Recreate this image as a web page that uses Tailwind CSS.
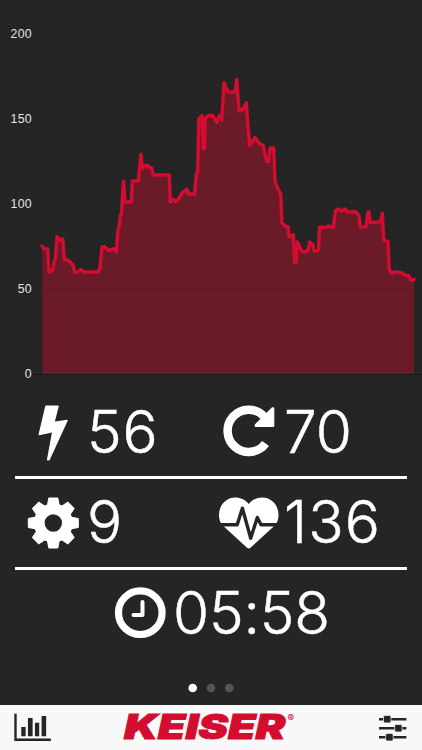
<!DOCTYPE html>
<html lang="en">
<head>
<meta charset="utf-8">
<title>Keiser</title>
<script src="https://cdn.jsdelivr.net/npm/@tailwindcss/browser@4"></script>
</head>
<body class="bg-[#252525]">
<main class="flex h-[750px] w-[422px] flex-col overflow-hidden bg-[#252525] font-['Inter','Liberation_Sans',sans-serif] text-white">
  <section class="flex h-[384px] shrink-0">
    <div class="flex w-8 flex-col justify-between pt-[25px] pb-[1px] text-right font-['Liberation_Sans',Arial,sans-serif] text-[12.3px] leading-[18px] tracking-[0.3px] text-[#e4e4e4]">
      <span>200</span><span>150</span><span>100</span><span>50</span><span>0</span>
    </div>
    <svg class="h-[384px] w-[390px]" viewBox="32 0 390 384" fill="none">
      <path d="M42 374V246L44 248.7L47.7 249L49 272L50.7 272L53 269L54 261.5L55.5 259L57 236.7L59.3 240L62.7 239L64.3 259.5L68.3 260.5L73 265L74.7 272H77.7L80.7 269.7L84.3 272H98.3L100 268L102 246.7H104.7L108.3 250.5L114 249L116.3 252L118 229L119.3 226L120.3 216L121.5 213L123.5 181L125 202H131.3L132.3 181.3L138.3 180.7L141 154.5L142.3 168.5L144.3 165.5H148L149.3 167.5L151.7 168L153 175H169.3L170.3 202L173.3 199L175.7 202L179.3 198L182 193L187 189L188.3 194H194.7L196.3 174L197.7 172L198.7 119L202 115.5L203 148.5H204.5L205.3 118L208.3 115.5H212.7L216.7 122.5L219.3 115.5L221.7 120L224 82.7L225.7 87L228.3 92H235L236.7 79.5L239 110.5L242.7 109.5L246.3 102.7L247.7 122.5L249.7 145.5L255 137.5L259 143.3L263.3 145.5L265.3 156L267 161.5H268.5L270 148H273.7L275 181L277 187L280.7 194L282 222.7L285.7 226.5H288L289 236.5L293.3 234.7L294.7 262.5H296L297.3 242L299.3 246L302 251.5L306 252L308.3 249L309.7 242L313 244.7L314.3 251.5L318.5 250L319.5 227.3H326L328.3 226L333.3 227.5L335.5 211L338.3 209L341 211L345 209L347.7 212L356 211.7L359 216L360.3 227H366L368 212H369L370.3 222.5L380.7 221.7L382.3 213.3L383.7 240L388 241.7L389.3 270L392.3 273.3L395 272L401.7 272.7L405 275.3H408L411.3 280L414 279.3V374Z" fill="#6b1b28"/>
      <path d="M32 34.5H422M32 119.5H422M32 204.5H422M32 289.5H422M42.5 28V374" stroke="#000" stroke-opacity=".07"/>
      <path d="M32 374.5H422" stroke="#171717"/>
      <path d="M42 246L44 248.7L47.7 249L49 272L50.7 272L53 269L54 261.5L55.5 259L57 236.7L59.3 240L62.7 239L64.3 259.5L68.3 260.5L73 265L74.7 272H77.7L80.7 269.7L84.3 272H98.3L100 268L102 246.7H104.7L108.3 250.5L114 249L116.3 252L118 229L119.3 226L120.3 216L121.5 213L123.5 181L125 202H131.3L132.3 181.3L138.3 180.7L141 154.5L142.3 168.5L144.3 165.5H148L149.3 167.5L151.7 168L153 175H169.3L170.3 202L173.3 199L175.7 202L179.3 198L182 193L187 189L188.3 194H194.7L196.3 174L197.7 172L198.7 119L202 115.5L203 148.5H204.5L205.3 118L208.3 115.5H212.7L216.7 122.5L219.3 115.5L221.7 120L224 82.7L225.7 87L228.3 92H235L236.7 79.5L239 110.5L242.7 109.5L246.3 102.7L247.7 122.5L249.7 145.5L255 137.5L259 143.3L263.3 145.5L265.3 156L267 161.5H268.5L270 148H273.7L275 181L277 187L280.7 194L282 222.7L285.7 226.5H288L289 236.5L293.3 234.7L294.7 262.5H296L297.3 242L299.3 246L302 251.5L306 252L308.3 249L309.7 242L313 244.7L314.3 251.5L318.5 250L319.5 227.3H326L328.3 226L333.3 227.5L335.5 211L338.3 209L341 211L345 209L347.7 212L356 211.7L359 216L360.3 227H366L368 212H369L370.3 222.5L380.7 221.7L382.3 213.3L383.7 240L388 241.7L389.3 270L392.3 273.3L395 272L401.7 272.7L405 275.3H408L411.3 280L414 279.3" stroke="#d40c30" stroke-width="3.4" stroke-linejoin="round" stroke-linecap="round"/>
    </svg>
  </section>

  <section class="mx-[15px] flex h-[275px] shrink-0 flex-col text-[58.5px] leading-none font-light [-webkit-text-stroke:0.5px_white]">
    <div class="flex h-[95px] items-center border-b-3 border-white pt-[4px]">
      <div class="flex w-[203px] items-center">
        <svg class="h-[60px] w-[73px] shrink-0" viewBox="15 402.5 73 60"><path d="M46 406.700H58L53.800 423.100L67 421L49 460.200H47.700L52.900 432L39.300 435Z" fill="#fff" stroke="#fff" stroke-width="1.500" stroke-linejoin="round"/></svg>
        <span class="-ml-px tracking-[0.8px]">56</span>
      </div>
      <div class="flex items-center">
        <svg class="h-[60px] w-[66px] shrink-0" viewBox="218 402.500 66 60" fill="none"><path d="M265.600 444A21.100 21.100 0 1 1 263.600 416.400L266 419" stroke="#fff" stroke-width="8.500"/><path d="M273.300 408.700V426.500H255.700V425.500L272.500 408.700Z" fill="#fff" stroke="#fff" stroke-width="2" stroke-linejoin="round"/></svg>
        <span>70</span>
      </div>
    </div>
    <div class="flex h-[91px] items-center border-b-3 border-white pb-[1px]">
      <div class="flex w-[203px] items-center">
        <svg class="h-[60px] w-[73px] shrink-0" viewBox="-38.300 -30 73 60"><g fill="#fff"><path fill-rule="evenodd" d="M0-19.500A19.500 19.500 0 1 1 0 19.500A19.500 19.500 0 1 1 0-19.500M0-8.700A8.700 8.700 0 1 0 0 8.700A8.700 8.700 0 1 0 0-8.700"/><g stroke="#fff" stroke-linejoin="round"><path id="tooth" d="M-6-17L-4.500-25H4.500L6-17Z"/><use href="#tooth" transform="rotate(45)"/><use href="#tooth" transform="rotate(90)"/><use href="#tooth" transform="rotate(135)"/><use href="#tooth" transform="rotate(180)"/><use href="#tooth" transform="rotate(225)"/><use href="#tooth" transform="rotate(270)"/><use href="#tooth" transform="rotate(315)"/></g></g></svg>
        <span class="-ml-px">9</span>
      </div>
      <div class="flex items-center">
        <svg class="h-[60px] w-[66px] shrink-0" viewBox="218 492.300 66 60"><path d="M248.700 503.300C243 495.500 231 494.500 224.500 501C217.500 507.500 217.500 519 222.500 524.500L247 547C248 548 249.500 548 250.500 547L275 524.500C280 519 280 507.500 273 501C266.500 494.500 254.500 495.500 248.700 503.300Z" fill="#fff"/><path d="M217 524H237.200L242.400 507.500L250.700 537.500L257.300 516.700L261 524H281" fill="none" stroke="#252525" stroke-width="3.400" stroke-linejoin="round"/></svg>
        <span class="tracking-[1.2px]">136</span>
      </div>
    </div>
    <div class="flex h-[89px] items-center pb-[3px] pl-[98px]">
      <svg class="h-[60px] w-[60px] shrink-0" viewBox="113 583 60 60" fill="none" stroke="#fff"><circle cx="140.300" cy="612.700" r="21.800" stroke-width="7.200"/><path d="M142.500 602V615H133.500" stroke-width="4" stroke-linecap="round" stroke-linejoin="round"/></svg>
      <span class="tracking-[-0.2px]">05:58</span>
    </div>
  </section>

  <div class="flex grow items-center justify-center gap-[9.500px] pt-[12px]">
    <svg class="h-[10px] w-[56px]" viewBox="183 683 56 10"><circle cx="192.700" cy="688" r="4.300" fill="#fff"/><circle cx="211" cy="688" r="4.300" fill="#555"/><circle cx="229.300" cy="688" r="4.300" fill="#555"/></svg>
  </div>

  <footer class="flex h-[45px] shrink-0 items-center bg-[#f8f8f8] px-[14px]">
    <svg class="h-[45px] w-[38px]" viewBox="14 705 38 45" fill="#252525"><path d="M14.300 713.700H16.700V738.500H51V741H14.300ZM21.300 727H25.700V736.300H21.300ZM28 718H32.700V736.300H28ZM35 722.700H39.300V736.300H35ZM41.700 716H46.300V736.300H41.700Z"/></svg>
    <svg class="ml-[68px] h-[45px] w-[180px]" viewBox="120 705 180 45" fill="#d40c30"><text x="124" y="739" textLength="162" lengthAdjust="spacingAndGlyphs" stroke="#d40c30" stroke-width="1" class="font-['Inter','Liberation_Sans',sans-serif] text-[34px] font-black italic">KEISER</text><text x="288.300" y="721.500" class="font-['Inter','Liberation_Sans',sans-serif] text-[10px] font-bold">®</text></svg>
    <svg class="ml-[79px] h-[45px] w-[30px]" viewBox="379 705 30 45" fill="#252525"><path d="M380 718H407.500V720.400H380ZM380 727.100H407.500V729.500H380ZM380 736.100H407.500V738.500H380Z"/><g stroke="#f8f8f8" stroke-width=".7"><rect x="384.500" y="715.400" width="7.500" height="7.500" rx="1.500"/><rect x="395.700" y="724.500" width="7.500" height="7.500" rx="1.500"/><rect x="386.700" y="733.500" width="7.500" height="7.500" rx="1.500"/></g></svg>
  </footer>
</main>
</body>
</html>
